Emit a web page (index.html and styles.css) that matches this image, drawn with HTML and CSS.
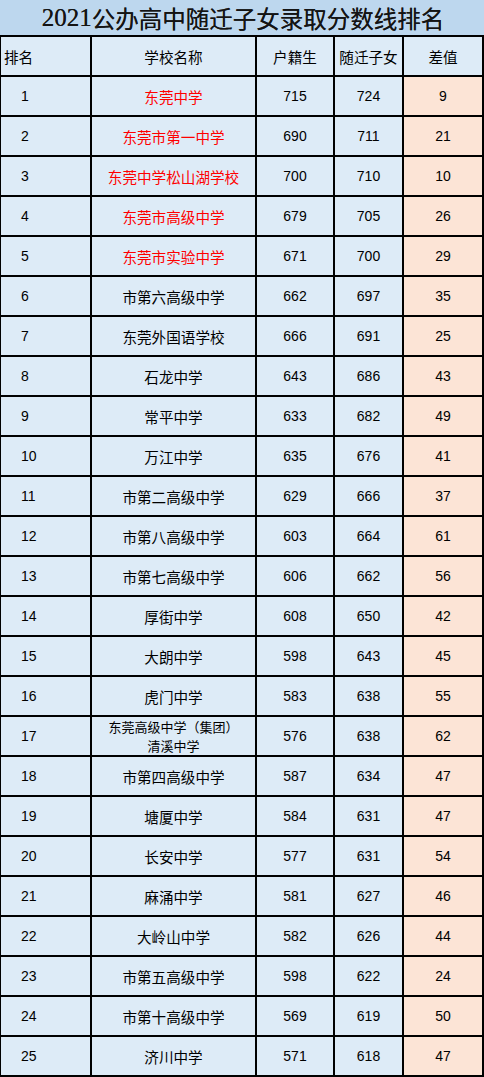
FILE: index.html
```html
<!DOCTYPE html>
<html lang="zh-CN">
<head>
<meta charset="utf-8">
<title>2021公办高中随迁子女录取分数线排名</title>
<link rel="stylesheet" href="styles.css">
</head>
<body>
<div class="title"><span class="yr">2021</span>公办高中随迁子女录取分数线排名</div>
<div class="sheet">
  <div class="c hd rk">排名</div><div class="c hd">学校名称</div><div class="c hd">户籍生</div><div class="c hd">随迁子女</div><div class="c hd">差值</div>

  <div class="c rk">1</div><div class="c nm red">东莞中学</div><div class="c num">715</div><div class="c num">724</div><div class="c num diff">9</div>
  <div class="c rk">2</div><div class="c nm red">东莞市第一中学</div><div class="c num">690</div><div class="c num">711</div><div class="c num diff">21</div>
  <div class="c rk">3</div><div class="c nm red">东莞中学松山湖学校</div><div class="c num">700</div><div class="c num">710</div><div class="c num diff">10</div>
  <div class="c rk">4</div><div class="c nm red">东莞市高级中学</div><div class="c num">679</div><div class="c num">705</div><div class="c num diff">26</div>
  <div class="c rk">5</div><div class="c nm red">东莞市实验中学</div><div class="c num">671</div><div class="c num">700</div><div class="c num diff">29</div>
  <div class="c rk">6</div><div class="c nm">市第六高级中学</div><div class="c num">662</div><div class="c num">697</div><div class="c num diff">35</div>
  <div class="c rk">7</div><div class="c nm">东莞外国语学校</div><div class="c num">666</div><div class="c num">691</div><div class="c num diff">25</div>
  <div class="c rk">8</div><div class="c nm">石龙中学</div><div class="c num">643</div><div class="c num">686</div><div class="c num diff">43</div>
  <div class="c rk">9</div><div class="c nm">常平中学</div><div class="c num">633</div><div class="c num">682</div><div class="c num diff">49</div>
  <div class="c rk">10</div><div class="c nm">万江中学</div><div class="c num">635</div><div class="c num">676</div><div class="c num diff">41</div>
  <div class="c rk">11</div><div class="c nm">市第二高级中学</div><div class="c num">629</div><div class="c num">666</div><div class="c num diff">37</div>
  <div class="c rk">12</div><div class="c nm">市第八高级中学</div><div class="c num">603</div><div class="c num">664</div><div class="c num diff">61</div>
  <div class="c rk">13</div><div class="c nm">市第七高级中学</div><div class="c num">606</div><div class="c num">662</div><div class="c num diff">56</div>
  <div class="c rk">14</div><div class="c nm">厚街中学</div><div class="c num">608</div><div class="c num">650</div><div class="c num diff">42</div>
  <div class="c rk">15</div><div class="c nm">大朗中学</div><div class="c num">598</div><div class="c num">643</div><div class="c num diff">45</div>
  <div class="c rk">16</div><div class="c nm">虎门中学</div><div class="c num">583</div><div class="c num">638</div><div class="c num diff">55</div>
  <div class="c rk">17</div><div class="c nm two"><span class="ln">东莞高级中学（集团）</span><span class="ln">清溪中学</span></div><div class="c num">576</div><div class="c num">638</div><div class="c num diff">62</div>
  <div class="c rk">18</div><div class="c nm">市第四高级中学</div><div class="c num">587</div><div class="c num">634</div><div class="c num diff">47</div>
  <div class="c rk">19</div><div class="c nm">塘厦中学</div><div class="c num">584</div><div class="c num">631</div><div class="c num diff">47</div>
  <div class="c rk">20</div><div class="c nm">长安中学</div><div class="c num">577</div><div class="c num">631</div><div class="c num diff">54</div>
  <div class="c rk">21</div><div class="c nm">麻涌中学</div><div class="c num">581</div><div class="c num">627</div><div class="c num diff">46</div>
  <div class="c rk">22</div><div class="c nm">大岭山中学</div><div class="c num">582</div><div class="c num">626</div><div class="c num diff">44</div>
  <div class="c rk">23</div><div class="c nm">市第五高级中学</div><div class="c num">598</div><div class="c num">622</div><div class="c num diff">24</div>
  <div class="c rk">24</div><div class="c nm">市第十高级中学</div><div class="c num">569</div><div class="c num">619</div><div class="c num diff">50</div>
  <div class="c rk">25</div><div class="c nm">济川中学</div><div class="c num">571</div><div class="c num">618</div><div class="c num diff">47</div>
</div>
</body>
</html>
```
FILE: styles.css
```css
html, body {
  margin: 0;
  padding: 0;
  background: #ffffff;
}
body {
  width: 484px;
  font-family: "Noto Sans CJK SC", sans-serif;
  color: #000;
}
.title {
  height: 35px;
  background: #bdd7ee;
  display: flex;
  align-items: center;
  justify-content: center;
  font-size: 23.5px;
  color: #141414;
  padding-left: 2px;
  box-sizing: border-box;
  text-shadow: 0 0 0.6px #333;
  white-space: nowrap;
}
.title .yr {
  font-family: "Liberation Serif", serif;
  font-size: 25px;
}
.sheet {
  display: grid;
  grid-template-columns: 89px 163px 76px 67px 78px;
  grid-auto-rows: 38px;
  gap: 2px;
  padding: 2px 2px 2px 1px;
  background: #000;
}
.c {
  background: #ddebf7;
  display: flex;
  align-items: center;
  justify-content: center;
  font-size: 14.6px;
  line-height: 19px;
  overflow: hidden;
  white-space: nowrap;
}
.rk {
  justify-content: flex-start;
  padding-left: 20px;
  font-family: "Liberation Sans", "Noto Sans CJK SC", sans-serif;
  font-size: 14px;
}
.hd.rk {
  padding-left: 3px;
  font-family: "Noto Sans CJK SC", sans-serif;
  font-size: 14.6px;
}
.num {
  font-family: "Liberation Sans", sans-serif;
  font-size: 14px;
}
.diff {
  background: #fce4d6;
}
.red {
  color: #ff0000;
}
.two {
  flex-direction: column;
  font-size: 13px;
  line-height: 19px;
}
.two .ln {
  display: block;
}
```
